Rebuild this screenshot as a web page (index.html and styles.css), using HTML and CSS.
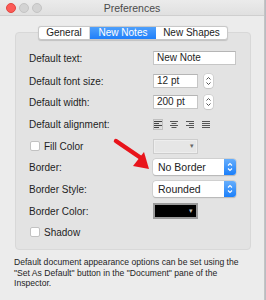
FILE: index.html
```html
<!DOCTYPE html>
<html>
<head>
<meta charset="utf-8">
<link rel="stylesheet" href="styles.css">
</head>
<body>
<div class="window">
  <div class="titlebar">
    <div class="lights"><span class="light red"></span><span class="light"></span><span class="light"></span></div>
    <div class="title">Preferences</div>
  </div>
  <div class="content">
    <div class="tabs">
      <span class="tab">General</span>
      <span class="tab active">New Notes</span>
      <span class="tab">New Shapes</span>
    </div>
    <div class="group">
      <div class="label">Default text:</div>
      <div class="ctl"><span class="field wide">New Note</span></div>

      <div class="label">Default font size:</div>
      <div class="ctl"><span class="field short">12 pt</span><span class="stepper"><svg viewBox="0 0 9 14" width="9" height="14"><path d="M2.5 5.5 L4.5 3.5 L6.5 5.5 M2.5 8.5 L4.5 10.5 L6.5 8.5" fill="none" stroke="#555" stroke-width="1"/></svg></span></div>

      <div class="label">Default width:</div>
      <div class="ctl"><span class="field short">200 pt</span><span class="stepper"><svg viewBox="0 0 9 14" width="9" height="14"><path d="M2.5 5.5 L4.5 3.5 L6.5 5.5 M2.5 8.5 L4.5 10.5 L6.5 8.5" fill="none" stroke="#555" stroke-width="1"/></svg></span></div>

      <div class="label">Default alignment:</div>
      <div class="ctl align">
        <span class="al sel"><svg width="8" height="7" viewBox="0 0 8 7"><path d="M0 .5H8M0 2.5H5M0 4.5H8M0 6.5H5" stroke="#444" stroke-width="1"/></svg></span>
        <span class="al"><svg width="8" height="7" viewBox="0 0 8 7"><path d="M0 .5H8M1.5 2.5H6.5M0 4.5H8M1.5 6.5H6.5" stroke="#555" stroke-width="1"/></svg></span>
        <span class="al"><svg width="8" height="7" viewBox="0 0 8 7"><path d="M0 .5H8M3 2.5H8M0 4.5H8M3 6.5H8" stroke="#555" stroke-width="1"/></svg></span>
        <span class="al"><svg width="8" height="7" viewBox="0 0 8 7"><path d="M0 .5H8M0 2.5H8M0 4.5H8M0 6.5H8" stroke="#555" stroke-width="1"/></svg></span>
      </div>

      <div class="label check"><span class="box"></span>Fill Color</div>
      <div class="ctl"><span class="well disabled"><span class="tri">▾</span></span></div>

      <div class="label">Border:</div>
      <div class="ctl"><span class="popup"><span class="ptext">No Border</span><span class="pbtn"><svg viewBox="0 0 12 16" width="12" height="16"><path d="M4 6.5 L6 4.5 L8 6.5 M4 9.5 L6 11.5 L8 9.5" fill="none" stroke="#fff" stroke-width="1.1"/></svg></span></span></div>

      <div class="label">Border Style:</div>
      <div class="ctl"><span class="popup"><span class="ptext">Rounded</span><span class="pbtn"><svg viewBox="0 0 12 16" width="12" height="16"><path d="M4 6.5 L6 4.5 L8 6.5 M4 9.5 L6 11.5 L8 9.5" fill="none" stroke="#fff" stroke-width="1.1"/></svg></span></span></div>

      <div class="label">Border Color:</div>
      <div class="ctl"><span class="well black"><span class="tri">▾</span></span></div>

      <div class="label check"><span class="box"></span>Shadow</div>
      <div class="ctl"></div>
    </div>
    <p class="note">Default document appearance options can be set using the "Set As Default" button in the "Document" pane of the Inspector.</p>
  </div>
  <svg class="arrow" width="50" height="40" viewBox="0 0 50 40">
    <path d="M4 5 L29 22" stroke="#e8141b" stroke-width="4.5" stroke-linecap="round"/>
    <path d="M37 33 L21 30 L32 16 Z" fill="#e8141b"/>
  </svg>
</div>
</body>
</html>
```

FILE: styles.css
```css
* { box-sizing: border-box; }
html, body { margin: 0; padding: 0; }
body {
  background: #b8bcc2;
  width: 266px;
  height: 300px;
  overflow: hidden;
  font-family: "Liberation Sans", Arial, sans-serif;
  color: #222;
}
.window {
  position: relative;
  width: 265px;
  height: 300px;
  background: #ececec;
  border-right: 1px solid #c4c4c4;
}
.titlebar {
  position: relative;
  height: 16px;
  background: linear-gradient(#ebebeb, #e0e0e0);
  border-bottom: 1px solid #cfcfcf;
  display: flex;
  align-items: center;
  justify-content: center;
}
.lights {
  position: absolute;
  left: 6px;
  top: 3px;
  display: flex;
  gap: 3px;
}
.light {
  width: 10px;
  height: 10px;
  border-radius: 50%;
  background: #d3d3d3;
  border: 1px solid #c4c4c4;
}
.light.red { background: #fc5b57; border-color: #e2463f; }
.title {
  font-size: 10.5px;
  color: #4a4a4a;
  line-height: 16px;
}
.content {
  padding: 10px 14px 0 15px;
}
.tabs {
  position: relative;
  z-index: 1;
  display: flex;
  margin-left: 23px;
  width: 190px;
  height: 14px;
  background: #fff;
  border: 1px solid #c8c8c8;
  border-radius: 3px;
  box-shadow: 0 0.5px 1px rgba(0,0,0,0.15);
  font-size: 10px;
  line-height: 12px;
}
.tab {
  display: flex;
  align-items: center;
  justify-content: center;
  color: #222;
}
.tab:nth-child(1) { width: 51px; border-right: 1px solid #d6d6d6; }
.tab:nth-child(2) { width: 66px; }
.tab:nth-child(3) { flex: 1; }
.tab.active {
  background: linear-gradient(#4fa0fb, #1f7ffa);
  color: #fff;
}
.group {
  margin-top: -8px;
  width: 236px;
  height: 218px;
  background: #e3e3e3;
  border: 1px solid #d8d8d8;
  border-radius: 4px;
  padding: 13px 0 0 13px;
  display: grid;
  grid-template-columns: 124px 1fr;
  grid-template-rows: 24px 22px 20px 24px 20px 22px 22px 22px 20px;
  font-size: 10px;
}
.label {
  display: flex;
  align-items: center;
  color: #1e1e1e;
}
.ctl {
  display: flex;
  align-items: center;
}
.field {
  height: 14px;
  background: #fff;
  border: 1px solid #c6c6c6;
  border-top-color: #b5b5b5;
  padding-left: 3px;
  font-size: 10px;
  line-height: 12px;
  color: #1e1e1e;
}
.field.wide { width: 83px; }
.field.short { width: 45px; }
.stepper {
  margin-left: 6px;
  width: 9px;
  height: 14px;
  background: #fff;
  border-radius: 3px;
  box-shadow: 0 0 0 0.5px #c4c4c4, 0 0.5px 1px rgba(0,0,0,0.2);
  display: flex;
}
.align { gap: 6px; }
.al {
  width: 10px;
  height: 11px;
  display: flex;
  align-items: center;
  justify-content: center;
}
.al.sel {
  background: #dadada;
  border: 1px solid #c0c0c0;
  box-shadow: inset 0 0 1px #fff;
}
.check { gap: 4px; padding-left: 1px; }
.box {
  width: 10px;
  height: 10px;
  background: #fff;
  border: 1px solid #c2c2c2;
  border-radius: 2px;
}
.well {
  position: relative;
  width: 45px;
  height: 15px;
}
.well.disabled {
  background: #e6e6e6;
  border: 1px solid #cdcdcd;
  box-shadow: inset 0 0 0 1px #eee;
}
.well.black {
  background: #000;
  border: 2px solid #9a9a9a;
  width: 45px;
  height: 16px;
}
.tri {
  position: absolute;
  right: 3px;
  top: 0;
  font-size: 7px;
  line-height: 12px;
  color: #666;
}
.well.black .tri { color: #bbb; }
.popup {
  display: flex;
  width: 83px;
  height: 16px;
  background: #fff;
  border-radius: 3px;
  box-shadow: 0 0 0 0.5px #c4c4c4, 0 0.5px 1px rgba(0,0,0,0.25);
  overflow: hidden;
}
.ptext {
  flex: 1;
  padding-left: 5px;
  font-size: 10.5px;
  line-height: 16px;
  color: #222;
}
.pbtn {
  width: 12px;
  background: linear-gradient(#66aefc, #1b7ffa);
  display: flex;
}
.note {
  margin: 7px 0 0 -1px;
  font-size: 8.6px;
  line-height: 10.5px;
  color: #1e1e1e;
}
.arrow {
  position: absolute;
  left: 112px;
  top: 136px;
}
```
